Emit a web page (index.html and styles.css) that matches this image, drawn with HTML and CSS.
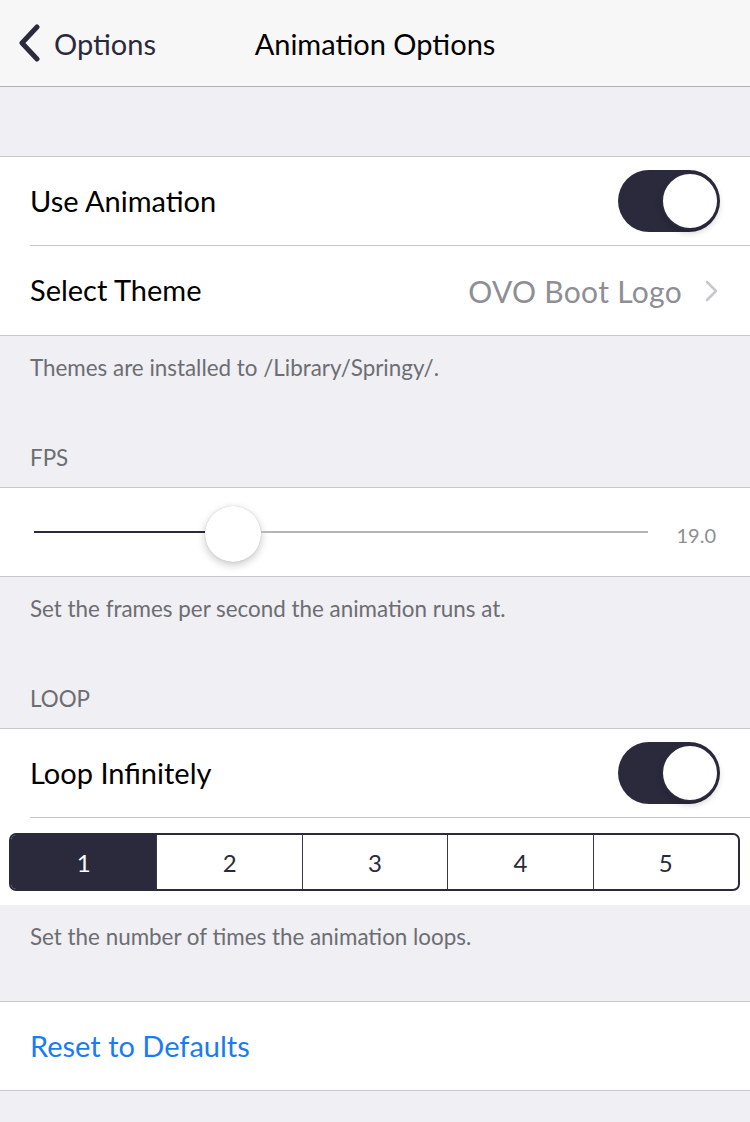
FILE: index.html
```html
<!DOCTYPE html>
<html>
<head>
<meta charset="utf-8">
<link rel="stylesheet" href="styles.css">
</head>
<body>
<div class="navbar">
  <div class="nav-back">
    <svg class="back-chevron" width="26" height="38" viewBox="0 0 26 38"><path d="M21 3 L6 19 L21 35" fill="none" stroke="#2b2a3d" stroke-width="5" stroke-linecap="round" stroke-linejoin="round"/></svg>
    <span class="back-label">Options</span>
  </div>
  <div class="nav-title">Animation Options</div>
  <div class="nav-right"></div>
</div>

<div class="top-gap"></div>

<div class="group">
  <div class="row">
    <span class="label">Use Animation</span>
    <div class="toggle"><div class="knob"></div></div>
  </div>
  <div class="sep"></div>
  <div class="row row-tall">
    <span class="label">Select Theme</span>
    <span class="detail">OVO Boot Logo
      <svg class="disclosure" width="16" height="24" viewBox="0 0 16 24"><path d="M3 3 L12 12 L3 21" fill="none" stroke="#c7c7cc" stroke-width="2.5" stroke-linecap="round" stroke-linejoin="round"/></svg>
    </span>
  </div>
</div>

<div class="footer">Themes are installed to /Library/Springy/.</div>
<div class="header">FPS</div>

<div class="group">
  <div class="row slider-row">
    <div class="slider">
      <div class="track-min" style="width: 171px"></div>
      <div class="thumb"></div>
      <div class="track-max"></div>
    </div>
    <span class="slider-value">19.0</span>
  </div>
</div>

<div class="footer">Set the frames per second the animation runs at.</div>
<div class="header">LOOP</div>

<div class="group group-open">
  <div class="row">
    <span class="label">Loop Infinitely</span>
    <div class="toggle"><div class="knob"></div></div>
  </div>
  <div class="sep"></div>
  <div class="segment-cell">
    <div class="segmented">
      <div class="seg active">1</div>
      <div class="seg">2</div>
      <div class="seg">3</div>
      <div class="seg">4</div>
      <div class="seg">5</div>
    </div>
  </div>
</div>

<div class="footer footer-last">Set the number of times the animation loops.</div>

<div class="group">
  <div class="row">
    <span class="label link">Reset to Defaults</span>
  </div>
</div>
</body>
</html>
```

FILE: styles.css
```css
* { box-sizing: border-box; }

html, body {
  margin: 0;
  padding: 0;
}

body {
  width: 750px;
  height: 1122px;
  overflow: hidden;
  background: #efeff4;
  font-family: Lato, "Open Sans", sans-serif;
  color: #000;
}

.navbar {
  height: 87px;
  background: #f7f7f8;
  border-bottom: 1px solid #b2b2b2;
  display: grid;
  grid-template-columns: 1fr auto 1fr;
  align-items: center;
}

.nav-back {
  display: flex;
  align-items: center;
  padding-left: 16px;
  gap: 12px;
  color: #2b2a3d;
  font-size: 29px;
}

.back-chevron { display: block; }

.nav-title {
  font-size: 29px;
  color: #000;
}

.top-gap { height: 69px; }

.group {
  background: #fff;
  border-top: 1px solid #c8c7cc;
  border-bottom: 1px solid #c8c7cc;
}

.group-open { border-bottom: none; }

.row {
  height: 88px;
  display: flex;
  align-items: center;
  justify-content: space-between;
  padding: 0 30px;
}

.row-tall { height: 89px; }

.sep {
  height: 1px;
  margin-left: 30px;
  background: #c8c7cc;
}

.label {
  font-size: 29px;
  color: #000;
  padding-bottom: 2px;
}

.link { color: #1a7cf0; }

.detail {
  display: flex;
  align-items: center;
  gap: 22px;
  font-size: 30px;
  letter-spacing: 0.3px;
  color: #8e8e93;
}

.disclosure { display: block; }

.toggle {
  width: 102px;
  height: 62px;
  border-radius: 31px;
  background: #2b2a3d;
  display: flex;
  align-items: center;
  justify-content: flex-end;
  padding-right: 1px;
}

.knob {
  width: 58px;
  height: 58px;
  border-radius: 50%;
  background: #fff;
  border: 2px solid #2b2a3d;
  box-shadow: 0 3px 6px rgba(0,0,0,0.18);
}

.footer {
  height: 88px;
  padding: 18px 30px 0;
  font-size: 22.4px;
  line-height: 28px;
  color: #6d6d72;
}

.footer-last { height: 96px; }

.header {
  height: 63px;
  padding: 20px 30px 0;
  font-size: 22.4px;
  line-height: 28px;
  color: #6d6d72;
}

.slider-row {
  padding: 0 34px 0 34px;
}

.slider {
  flex: 1;
  display: flex;
  align-items: center;
  margin-right: 28px;
}

.track-min {
  height: 2px;
  background: #2b2a3d;
}

.track-max {
  flex: 1;
  height: 2px;
  background: #b6b6b6;
}

.thumb {
  width: 56px;
  height: 56px;
  border-radius: 50%;
  background: #fff;
  box-shadow: 0 3px 8px rgba(0,0,0,0.22), 0 0 1px rgba(0,0,0,0.25);
  margin: 4px 0 0;
  flex-shrink: 0;
}

.slider-value {
  font-size: 20px;
  color: #8e8e93;
  padding-top: 6px;
}

.segment-cell {
  padding: 15px 10px 14px;
}

.segmented {
  height: 58px;
  display: grid;
  grid-template-columns: repeat(5, 1fr);
  border: 2px solid #2b2a3d;
  border-radius: 7px;
  overflow: hidden;
  margin-left: -1px;
}

.seg {
  display: flex;
  align-items: center;
  justify-content: center;
  font-size: 24px;
  color: #2b2a3d;
  border-left: 1.5px solid #3a394a;
}

.seg:first-child { border-left: none; }

.seg.active {
  background: #2b2a3d;
  color: #fff;
}
```
